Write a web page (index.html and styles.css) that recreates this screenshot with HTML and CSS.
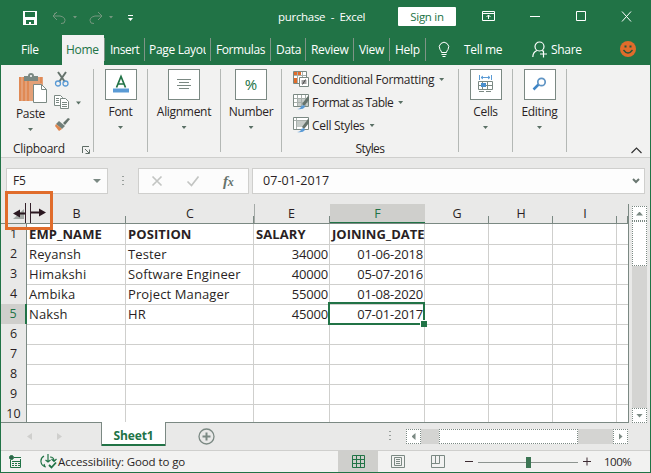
FILE: index.html
```html
<!DOCTYPE html>
<html lang="en">
<head>
<meta charset="utf-8">
<title>purchase - Excel</title>
<link rel="stylesheet" href="styles.css">
</head>
<body>
<div class="window">
  <header class="titlebar">
    <div class="quick">
      <svg width="125" height="20" viewBox="0 0 125 20" fill="none">
        <path d="M2 3h14v14H2z" fill="#fff"/><path d="M4 4h10v5H4zM5 12h8v4h-3v-2H8v2H5z" fill="#217346"/>
        <g stroke="#75977f"><path d="M36 4l-4 4 4 4M32 8h7q5 1 5 4.500T40 15.500M35 5l-2 1M77 4l4 4-4 4M81 8h-7q-5 1-5 4.500t4 3"/></g>
        <path d="M52 8h4l-2 2.500zM88 8h4l-2 2.500z" fill="#75977f"/>
        <path d="M107 7.500h5" stroke="#fff"/><path d="M107 10h5l-2.500 3z" fill="#fff"/>
      </svg>
    </div>
    <div class="doc">purchase&nbsp; -&nbsp; Excel</div>
    <div class="signin">Sign in</div>
    <svg class="controls" width="160" height="20" viewBox="0 0 160 20" fill="none" stroke="#fff">
      <path d="M.5 4.500h12v9H.5zM.5 6.500h12M6.500 12V8M4.500 10l2-2 2 2M48 9.500h10M94.500 4.500h9v9h-9zM140 4.500l9 10M149 4.500l-9 10"/>
    </svg>
  </header>
  <nav class="tabs">
    <div class="tab file">File</div>
    <div class="tab home">Home</div>
    <div class="tab insert">Insert</div>
    <div class="tab page"><span>Page Layout</span></div>
    <div class="tab formulas">Formulas</div>
    <div class="tab data">Data</div>
    <div class="tab review">Review</div>
    <div class="tab view">View</div>
    <div class="tab help">Help</div>
    <svg class="bulb" width="12" height="18" viewBox="0 0 12 18" fill="none" stroke="#fff"><path d="M3.500 11.500Q3.500 10 2 8.500A4.700 4.700 0 1 1 10 8.500Q8.500 10 8.500 11.500zM3.500 13.500h5M4.500 15.500h3"/></svg>
    <div class="tell">Tell me</div>
    <svg class="person" width="17" height="18" viewBox="0 0 17 18" fill="none" stroke="#fff" stroke-width="1.200"><circle cx="7.500" cy="5.500" r="4.500"/><path d="M.8 16Q1 11 5 9.500M10 9.500l1.500 1M11.500 9.500v7M8 13h7"/></svg>
    <div class="share">Share</div>
    <svg class="smile" width="16" height="16" viewBox="0 0 16 16"><circle cx="8" cy="8" r="8" fill="#e06c2b"/><path d="M4.500 4.500h2v2h-2zM9.500 4.500h2v2h-2z" fill="#23563b"/><path d="M3.500 9q4.500 6 9 0" fill="none" stroke="#23563b" stroke-width="1.300"/></svg>
  </nav>
  <section class="ribbon">
    <div class="group clipboard">
      <div class="cliprow">
        <div class="paste">
          <svg width="29" height="32" viewBox="0 0 29 32"><path d="M1 5h24v24H1z" fill="#e3a078"/><path d="M1 5h2v24H1zM5 5h2v24H5zM9 9h2v20H9zM22 5h2v6h-2z" fill="#e08a55"/><path d="M6 4h4a3 3 0 0 1 6 0h4v5H6z" fill="#7b8983"/><circle cx="13" cy="4" r="1" fill="#fff"/><path d="M15.500 12.500h8l5 5v13h-13z" fill="#fff" stroke="#7b8983"/><path d="M23.500 12.500v5h5" fill="none" stroke="#7b8983"/></svg>
          <span>Paste</span>
          <i class="arrow"></i>
        </div>
        <div class="cliptools">
          <svg width="28" height="64" viewBox="0 0 28 64" fill="none">
            <path d="M4 1l7 10M12 1L5 11" stroke="#65736c" stroke-width="2"/><circle cx="4" cy="12.500" r="2.500" stroke="#5b9bd5" stroke-width="1.300"/><circle cx="11.500" cy="12.500" r="2.500" stroke="#5b9bd5" stroke-width="1.300"/>
            <g fill="#fff" stroke="#7b8983"><path d="M.5 24.500h6l2 2v8h-8z"/><path d="M6.500 27.500h5l3 3v7h-8z"/></g><path d="M2 27.500h3M2 29.500h3M2 31.500h3M8 31.500h5M8 33.500h5M8 35.500h5" stroke="#7b8983"/>
            <path d="M22 30.500h5l-2.500 3z" fill="#5a7065"/>
            <path d="M9 52l5-5 2 1-5 6z" fill="#65736c"/><path d="M5 50l6 5-3 3-6-5z" fill="#71807a"/><path d="M2 53l6 5-3 2-4-5z" fill="#e0874f"/>
          </svg>
        </div>
      </div>
      <div class="grouplabel">Clipboard
        <svg width="8" height="8" viewBox="0 0 8 8" fill="none" stroke="#5f6d66"><path d="M.5 7V.5H7M3 3l4 4M7.500 3.500v4h-4"/></svg>
      </div>
    </div>
    <div class="group font"><div class="box"><svg width="30" height="29" viewBox="0 0 30 29"><path d="M10.500 17.500L15 6.500l4.500 11M12 14h6" fill="none" stroke="#217346" stroke-width="1.700"/><path d="M7 18.500h16v4H7z" fill="#5b9bd5"/></svg></div><span>Font</span><i class="arrow"></i></div>
    <div class="group align"><div class="box"><svg width="30" height="29" viewBox="0 0 30 29" stroke="#7b8983"><path d="M8 9.500h14M10 12.500h10M8 15.500h14M10 18.500h10"/></svg></div><span>Alignment</span><i class="arrow"></i></div>
    <div class="group number"><div class="box percent">%</div><span>Number</span><i class="arrow"></i></div>
    <div class="group styles">
      <div class="stylelist">
        <div class="styleitem"><svg width="16" height="16" viewBox="0 0 16 16"><path d="M.5.5h13v12H.5z" fill="#fff" stroke="#7b8983"/><path d="M1 1h7v4H1zM1 7h4v5H1z" fill="#e06c2b"/><path d="M4.500 1v11M9.500 1v6M1 4.500h12" stroke="#a8b0ac"/><path d="M6.500 6.500h9v9h-9z" fill="#fff" stroke="#7b8983"/><path d="M8.500 10h5M8.500 12h5M12.500 8.500l-3 5" stroke="#444"/></svg><span>Conditional Formatting</span><i class="arrow"></i></div>
        <div class="styleitem"><svg width="16" height="16" viewBox="0 0 16 16"><path d="M.5.5h15v12H.5z" fill="#fff" stroke="#7b8983"/><path d="M5 4h10v8H5z" fill="#c5cbc8"/><path d="M1 4.500h14M1 8.500h14M4.500 1v11M8.500 1v11M12.500 1v11" stroke="#a8b0ac"/><path d="M9 10l6-8 1 1v3l-5 6z" fill="#65736c"/><path d="M4 15q4 0 4-3l3-1 1 2q-2 3-8 2z" fill="#5b9bd5"/></svg><span class="tight">Format as Table</span><i class="arrow"></i></div>
        <div class="styleitem"><svg width="16" height="16" viewBox="0 0 16 16"><path d="M.5.5h15v12H.5z" fill="#fff" stroke="#7b8983"/><path d="M4 4h9v6H4z" fill="#c5cbc8"/><path d="M1 3.500h14M3.500 1v11" stroke="#a8b0ac"/><path d="M9 10l6-8 1 1v3l-5 6z" fill="#65736c"/><path d="M4 15q4 0 4-3l3-1 1 2q-2 3-8 2z" fill="#5b9bd5"/></svg><span>Cell Styles</span><i class="arrow"></i></div>
      </div>
      <div class="styleslabel">Styles</div>
    </div>
    <div class="group cells"><div class="box"><svg width="30" height="29" viewBox="0 0 30 29" fill="none"><path d="M8.500 5v5M20.500 5v5M10 7.500h9M12 6l-2 1.500 2 1.500M17 6l2 1.500-2 1.500" stroke="#5b9bd5"/><path d="M7.500 11.500h14v8h-14zM7 15.500h15M11.500 12v8M16.500 12v8M8 21.500h5M15 21.500h5" stroke="#7b8983"/><path d="M10 13h5v4h-5z" fill="#4a8fce"/></svg></div><span>Cells</span><i class="arrow"></i></div>
    <div class="group editing"><div class="box"><svg width="30" height="29" viewBox="0 0 30 29" fill="none"><path d="M8.500 19.500l5-5" stroke="#3f86c6" stroke-width="2.500"/><circle cx="16.500" cy="12" r="3.700" stroke="#5f94c4" stroke-width="1.700"/></svg></div><span>Editing</span><i class="arrow"></i></div>
    <svg class="collapse" width="11" height="7" viewBox="0 0 11 7" fill="none" stroke="#333" stroke-width="1.200"><path d="M.5 6l5-5 5 5"/></svg>
  </section>
  <section class="formulabar">
    <div class="namebox"><span>F5</span><i class="arrow big"></i></div>
    <div class="dots"></div>
    <div class="fxbox">
      <svg width="50" height="14" viewBox="0 0 50 14" fill="none" stroke="#c3c5c3" stroke-width="1.700"><path d="M1.500 2.500l9 9M10.500 2.500l-9 9M36.500 7.500l4 4 7-9"/></svg>
      <span class="fx"><i>f</i><i class="x">x</i></span>
    </div>
    <div class="formula"><span>07-01-2017</span><svg width="8" height="6" viewBox="0 0 8 6" fill="none" stroke="#6a7771" stroke-width="2"><path d="M1 1l3 3 3-3"/></svg></div>
  </section>
  <main class="sheet">
    <div class="grid">
      <div class="hrow"><b class="corner"></b><b>B</b><b>C</b><b class="hidden-next">E</b><b class="sel">F</b><b>G</b><b>H</b><b>I</b><b></b></div>
      <div class="row strong"><b>1</b><span>EMP_NAME</span><span>POSITION</span><span>SALARY</span><span class="date">JOINING_DATE</span><span></span><span></span><span></span><span></span></div>
      <div class="row"><b>2</b><span>Reyansh</span><span>Tester</span><span class="num">34000</span><span class="num date">01-06-2018</span><span></span><span></span><span></span><span></span></div>
      <div class="row"><b>3</b><span>Himakshi</span><span>Software Engineer</span><span class="num">40000</span><span class="num date">05-07-2016</span><span></span><span></span><span></span><span></span></div>
      <div class="row"><b>4</b><span>Ambika</span><span>Project Manager</span><span class="num">55000</span><span class="num date">01-08-2020</span><span></span><span></span><span></span><span></span></div>
      <div class="row"><b class="sel">5</b><span>Naksh</span><span>HR</span><span class="num">45000</span><span class="num date active">07-01-2017</span><span></span><span></span><span></span><span></span></div>
      <div class="row"><b>6</b><span></span><span></span><span></span><span></span><span></span><span></span><span></span><span></span></div>
      <div class="row"><b>7</b><span></span><span></span><span></span><span></span><span></span><span></span><span></span><span></span></div>
      <div class="row"><b>8</b><span></span><span></span><span></span><span></span><span></span><span></span><span></span><span></span></div>
      <div class="row"><b>9</b><span></span><span></span><span></span><span></span><span></span><span></span><span></span><span></span></div>
      <div class="row"><b>10</b><span></span><span></span><span></span><span></span><span></span><span></span><span></span><span></span></div>
    </div>
    <div class="vscroll">
      <div class="btn"><i class="up"></i></div>
      <div class="vthumb"></div>
      <div class="track"></div>
      <div class="btn"><i class="down"></i></div>
    </div>
    <div class="callout"><svg width="42" height="33" viewBox="0 0 42 33"><path d="M16 15v10H5z" fill="#a3a8a5"/><path d="M18 9h4v20h-4z" fill="#e9e9e8"/><path d="M17.500 9v20M22.500 9v20" stroke="#33202a"/><path d="M5 19.500l7-4v3h5v2h-5v3zM38 18.500l-7-4v3h-8v2h8v3z" fill="#2b1820"/></svg></div>
  </main>
  <section class="sheettabs">
    <i class="prev"></i><i class="next"></i>
    <div class="sheettab">Sheet1</div>
    <svg class="add" width="17" height="17" viewBox="0 0 17 17" fill="none" stroke="#7b8983"><circle cx="8.500" cy="8.500" r="7.500" stroke-width="1.300"/><path d="M8.500 4.500v8M4.500 8.500h8" stroke-width="2"/></svg>
    <div class="dots"></div>
    <div class="hscroll">
      <div class="btn"><i class="left"></i></div>
      <div class="hgap"></div>
      <div class="hthumb"></div>
      <div class="track"></div>
      <div class="btn"><i class="right"></i></div>
    </div>
  </section>
  <footer class="status">
    <svg class="macro" width="13" height="14" viewBox="0 0 13 14" fill="none" stroke="#217346"><path d="M1.500 5v7.500h10V4M5 2.500h7M3 6.500h8M3 8.500h2M6 8.500h2M9 8.500h2M3 10.500h2M6 10.500h2M9 10.500h2"/><circle cx="2.500" cy="2.500" r="2" fill="#33604a"/></svg>
    <svg class="access" width="17" height="15" viewBox="0 0 17 15" fill="none" stroke="#217346" stroke-width="1.200"><path d="M4 2Q.5 4 1 8t5 5M5 13l-1-3M8 0v8M5.500 6L8 8l2.500-2M10 3q4 0 4 4M11.500 5L14 7.500 16.500 5"/><path d="M9 11l2.500 2.500L16 8.500" stroke-width="1.800"/></svg>
    <span class="acctext">Accessibility: Good to go</span>
    <div class="viewbtn on"><svg width="13" height="13" viewBox="0 0 13 13" fill="none" stroke="#217346"><path d="M.5.5h12v12H.5zM0 4.500h13M0 8.500h13M4.500 0v13M8.500 0v13"/></svg></div>
    <div class="viewbtn"><svg width="14" height="13" viewBox="0 0 14 13" fill="none" stroke="#7b8983"><path d="M.5.5h13v12H.5zM3.500 2.500h7v8h-7zM5 4.500h4M5 6.500h4M5 8.500h4"/></svg></div>
    <div class="viewbtn"><svg width="14" height="13" viewBox="0 0 14 13" fill="none" stroke="#7b8983"><path d="M.5.5h13v12H.5zM.5 8.500h8v-8M4.500.5v8"/></svg></div>
    <div class="zoom">
      <svg width="126" height="12" viewBox="0 0 126 12" fill="none"><path d="M0 5.500h8M118 5.500h8M122 1.500v8" stroke="#3d2b32"/><path d="M13 6.500h100" stroke="#8d9490"/><path d="M61 1h5v11h-5z" fill="#3c7554"/></svg>
    </div>
    <span class="pct">100%</span>
  </footer>
</div>
</body>
</html>
```
FILE: styles.css
```css
* { box-sizing: border-box; }
body { margin: 0; font: 12px/16px "Open Sans", sans-serif; letter-spacing: -0.3px; color: #2a1f24; overflow: hidden; }
svg { display: block; flex: none; }
.window { width: 651px; height: 473px; border: 1px solid #217346; border-top: 0; background: #e9e9e8; display: flex; flex-direction: column; }

.titlebar { height: 35px; background: #217346; color: #fff; display: flex; font-size: 11.5px; flex: none; }
.quick { width: 277px; padding: 8px 0 0 20px; flex: none; }
.doc { width: 120px; padding-top: 9px; white-space: nowrap; flex: none; }
.signin { width: 58px; height: 19px; margin-top: 7px; background: #fff; color: #217346; border-radius: 1px; text-align: center; line-height: 19px; flex: none; }
.controls { margin: 7px 0 0 26px; }

.tabs { height: 30px; background: #217346; color: #fff; display: flex; flex: none; line-height: 29px; }
.tab { position: relative; flex: none; white-space: nowrap; }
.tab:not(.file)::after { content: ""; position: absolute; right: 0; top: 3px; width: 1px; height: 23px; background: #7f9486; }
.file { width: 61px; padding-left: 20px; }
.home { width: 43px; padding-left: 4px; color: #217346; background: linear-gradient(to right, #f2f2f2 42px, #217346 42px); }
.insert { width: 40px; padding-left: 5px; letter-spacing: -.5px; }
.page { width: 66px; padding-left: 4px; }
.page span { display: block; width: 57px; overflow: hidden; }
.formulas { width: 60px; padding-left: 5px; letter-spacing: -.4px; }
.data { width: 35px; padding-left: 5px; }
.review { width: 48px; padding-left: 5px; }
.view { width: 36px; padding-left: 5px; }
.help { width: 36px; padding-left: 5px; }
.bulb { margin: 6px 0 0 12px; }
.tell { width: 76px; padding-left: 14px; white-space: nowrap; }
.person { margin: 6px 0 0 6px; }
.share { width: 72px; padding-left: 2px; }
.smile { margin: 6px 0 0 -1px; }

.ribbon { height: 93px; flex: none; background: #f2f2f1; border-bottom: 1px solid #cfcfcd; display: flex; }
.group { height: 83px; margin-top: 4px; border-right: 1px solid #b4b8b5; display: flex; flex-direction: column; align-items: center; flex: none; }
.group > span { margin-top: 3px; line-height: 18px; white-space: nowrap; }
.group > .arrow { margin-top: 5px; }
.arrow { width: 5px; height: 3px; background: #5a7065; clip-path: polygon(0 0, 100% 0, 50% 100%); flex: none; }
.arrow.big { width: 8px; height: 4px; background: #7b8983; }
.box { width: 32px; height: 31px; border: 1px solid #7b8983; background: #fff; }
.percent { color: #217346; font-size: 15px; line-height: 29px; text-align: center; letter-spacing: 0; }
.clipboard { width: 93px; align-items: stretch; }
.cliprow { display: flex; height: 71px; padding-left: 12px; flex: none; }
.paste { width: 35px; display: flex; flex-direction: column; align-items: center; padding-top: 3px; }
.paste svg { margin-left: 3px; }
.paste span { line-height: 18px; margin-top: 1px; }
.paste .arrow { margin-top: 5px; }
.cliptools { padding: 2px 0 0 6px; }
.grouplabel { display: flex; align-items: flex-start; justify-content: space-between; width: 89px; padding: 1px 0 0 12px; flex: none; }
.grouplabel svg { margin-top: 5px; }
.font { width: 54px; }
.align { width: 73px; }
.number { width: 61px; }
.styles { width: 177px; align-items: stretch; }
.stylelist { height: 71px; padding: 2px 0 0 11px; flex: none; }
.styleitem { height: 23px; display: flex; align-items: flex-start; white-space: nowrap; }
.styleitem span { margin-left: 3px; line-height: 17px; }
.styleitem .tight { letter-spacing: -.55px; }
.styleitem .arrow { margin: 7px 0 0 5px; }
.styleslabel { text-align: center; margin-top: 1px; flex: none; letter-spacing: -.6px; }
.cells, .editing { width: 54px; }
.collapse { margin: 82px 0 0 64px; }

.formulabar { height: 46px; flex: none; padding: 10px 5px 10px 5px; display: flex; }
.namebox { width: 102px; border: 1px solid #cfcfcd; background: #fcfcfc; display: flex; align-items: center; justify-content: space-between; padding: 0 6px; }
.dots { width: 2px; height: 11px; background: repeating-linear-gradient(#999f9c 0 1px, transparent 1px 4px); flex: none; }
.formulabar .dots { margin: 8px 14px; }
.fxbox { width: 111px; border: 1px solid #cfcfcd; background: #fcfcfc; display: flex; align-items: center; padding-left: 12px; margin-right: 3px; }
.fx { margin-left: 22px; color: #66736c; font: bold italic 15px "Liberation Serif", serif; }
.fx .x { font-size: 12px; }
.formula { flex: 1; border: 1px solid #cfcfcd; background: #fdfdfd; display: flex; align-items: center; justify-content: space-between; padding: 0 1px 0 10px; font-size: 12.500px; letter-spacing: .1px; }
.formula svg { margin-right: 3px; }

.sheet { height: 219px; flex: none; display: flex; position: relative; }
.grid { width: 628px; flex: none; background: #fff; border-right: 1px solid #7b8983; border-bottom: 1px solid #7b8983; overflow: hidden; letter-spacing: 0; font-size: 13px; }
.hrow, .row { display: grid; grid-template-columns: 26px 99px 128px 76px 95px 64px 64px 64px 11px; height: 20px; }
.hrow { background: #e9e9e8; border-bottom: 1px solid #7b8983; line-height: 19px; }
.grid b { font-weight: 400; text-align: center; white-space: nowrap; }
.hrow b { font-size: 12.500px; background: linear-gradient(#7b8983, #7b8983) right 12px / 1px 9px no-repeat; }
.hrow .hidden-next { border-left: 1px solid #a4aaa7; padding-right: 2px; }
.hrow .corner { background: none; }
.hrow .sel { background: #cfcfcc; color: #217346; box-shadow: inset 0 -1px #217346; }
.row > b { background: #e9e9e8; border-right: 1px solid #7b8983; border-bottom: 1px solid #b8bcba; line-height: 20px; font-size: 12.500px; }
.row > .sel { background: #cfcfcc; color: #217346; border-right: 2px solid #217346; }
.row span { border-right: 1px solid #cfcfcd; border-bottom: 1px solid #cfcfcd; line-height: 20px; padding-left: 2px; white-space: nowrap; letter-spacing: .12px; }
.row span:last-child { border-right: 0; }
.row .num { text-align: right; padding: 0 1px 0 0; letter-spacing: -.2px; }
.row.strong span { font-weight: 700; letter-spacing: .1px; }
.row.strong .date { padding-left: 2px; letter-spacing: 0; }
.row .active { position: relative; }
.active::before { content: ""; position: absolute; inset: -2px -1px -1px -2px; border: 2px solid #217346; }
.active::after { content: ""; position: absolute; right: -3px; bottom: -3px; width: 6px; height: 6px; background: #217346; border: solid #fff; border-width: 1px 0 0 1px; }
.callout { position: absolute; left: 4px; top: -13px; width: 48px; height: 39px; border: 3px solid #e06c2b; }

.btn { width: 15px; height: 15px; border: 1px dotted #7b8983; background: #fff; display: flex; align-items: center; justify-content: center; flex: none; }
.up, .down { width: 7px; height: 4px; background: #7b8983; clip-path: polygon(50% 0, 100% 100%, 0 100%); }
.down { clip-path: polygon(0 0, 100% 0, 50% 100%); }
.left, .right { width: 4px; height: 7px; background: #7b8983; clip-path: polygon(0 50%, 100% 0, 100% 100%); }
.right { clip-path: polygon(0 0, 100% 50%, 0 100%); }
.vscroll { margin: 2px 0 0 3px; display: flex; flex-direction: column; width: 15px; }
.vthumb { height: 45px; background: #fff; border: 1px dotted #7b8983; }
.track { flex: 1; background: #d4d4d2; }

.sheettabs { height: 28px; flex: none; display: flex; border-bottom: 1px solid #cfcfcd; }
.prev, .next { width: 5px; height: 7px; margin: 10px 0 0 26px; background: #cfcfcd; clip-path: polygon(0 50%, 100% 0, 100% 100%); }
.next { margin-left: 25px; clip-path: polygon(0 0, 100% 50%, 0 100%); }
.sheettab { width: 65px; height: 24px; margin: -1px 0 0 39px; background: #fff; border: 1px solid #7b8983; border-width: 0 1px; box-shadow: inset 0 -2px #217346; color: #217346; font-weight: 700; text-align: center; line-height: 27px; letter-spacing: -.1px; position: relative; }
.add { margin: 5px 0 0 32px; }
.sheettabs .dots { margin: 8px 0 0 174px; }
.hscroll { width: 222px; height: 15px; margin: 6px 0 0 15px; display: flex; }
.hgap { width: 18px; background: #d4d4d2; }
.hthumb { width: 139px; background: #fff; border: 1px dotted #7b8983; }

.status { height: 21px; flex: none; display: flex; align-items: center; background: #f2f2f1; font-size: 11.500px; }
.macro { margin-left: 8px; }
.access { margin-left: 18px; }
.acctext { width: 281px; padding-left: 1px; white-space: nowrap; font-size: 11.500px; letter-spacing: -.1px; }
.viewbtn { width: 40px; height: 21px; display: flex; align-items: center; justify-content: center; flex: none; }
.viewbtn.on { background: #cfcfcc; }
.zoom { margin-left: 7px; }
.pct { margin-left: 13px; letter-spacing: -.5px; }
```
